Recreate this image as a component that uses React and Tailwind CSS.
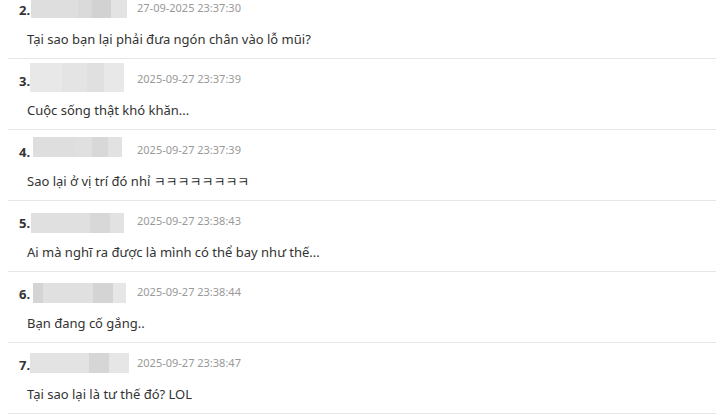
import React from 'react';

const comments = [
  {
    no: 2,
    date: '27-09-2025 23:37:30',
    text: 'Tại sao bạn lại phải đưa ngón chân vào lỗ mũi?',
    blurClass: 'ml-0 mt-[2px] h-[18px]',
    blur: [[47, '#dedede'], [14, '#dadada'], [19, '#d2d2d2'], [16, '#e3e3e3']],
  },
  {
    no: 3,
    date: '2025-09-27 23:37:39',
    text: 'Cuộc sống thật khó khăn...',
    blurClass: 'ml-[-1px] mt-[-6px] h-[29px]',
    blur: [[32, '#e8e8e8'], [25, '#e4e4e4'], [17, '#e0e0e0'], [20, '#e8e8e8']],
  },
  {
    no: 4,
    date: '2025-09-27 23:37:39',
    text: 'Sao lại ở vị trí đó nhỉ ㅋㅋㅋㅋㅋㅋㅋㅋ',
    blurClass: 'ml-[2px] mt-[-3px] h-[20px]',
    blur: [[42, '#dedede'], [17, '#e0e0e0'], [16, '#d8d8d8'], [14, '#e2e2e2']],
  },
  {
    no: 5,
    date: '2025-09-27 23:38:43',
    text: 'Ai mà nghĩ ra được là mình có thể bay như thế...',
    blurClass: 'ml-0 mt-[2px] h-[20px]',
    blur: [[59, '#e0e0e0'], [20, '#d8d8d8'], [14, '#e2e2e2']],
  },
  {
    no: 6,
    date: '2025-09-27 23:38:44',
    text: 'Bạn đang cố gắng..',
    blurClass: 'ml-[2px] mt-[1px] h-[20px]',
    blur: [[10, '#d4d4d4'], [50, '#e0e0e0'], [20, '#d4d4d4'], [13, '#e6e6e6']],
  },
  {
    no: 7,
    date: '2025-09-27 23:38:47',
    text: 'Tại sao lại là tư thế đó? LOL',
    blurClass: 'ml-[-1px] mt-0 h-[20px]',
    blur: [[59, '#e3e3e3'], [20, '#d6d6d6'], [20, '#e6e6e6']],
  },
];

const BlurredName = ({ segments, className }) => (
  <div className={`flex self-start shrink-0 ${className}`}>
    {segments.map(([w, c], i) => (
      <div key={i} className="h-full" style={{ width: w, background: c }} />
    ))}
  </div>
);

const CommentItem = ({ item }) => (
  <li className="border-b border-[#e6e6e6] pt-[10px] pb-[10px]">
    <div className="flex h-5 pl-[11px]">
      <div className="flex w-[118px] shrink-0">
        <span className="relative z-10 mt-[2px] w-[12px] shrink-0 self-start text-[13px] font-bold leading-5 text-[#333]">
          {item.no}.
        </span>
        <BlurredName segments={item.blur} className={item.blurClass} />
      </div>
      <span className="self-center text-[11px] leading-5 text-[#999]">{item.date}</span>
    </div>
    <p className="mt-[12px] pl-[19px] text-[13px] leading-[18px] text-[#333]">{item.text}</p>
  </li>
);

export default function App() {
  return (
    <div
      className="h-[418px] w-[716px] overflow-hidden bg-white"
      style={{ fontFamily: '"Noto Sans", "Noto Sans CJK KR", sans-serif' }}
    >
      <ul className="ml-2 mt-[-12px]">
        {comments.map((c) => (
          <CommentItem key={c.no} item={c} />
        ))}
      </ul>
    </div>
  );
}
